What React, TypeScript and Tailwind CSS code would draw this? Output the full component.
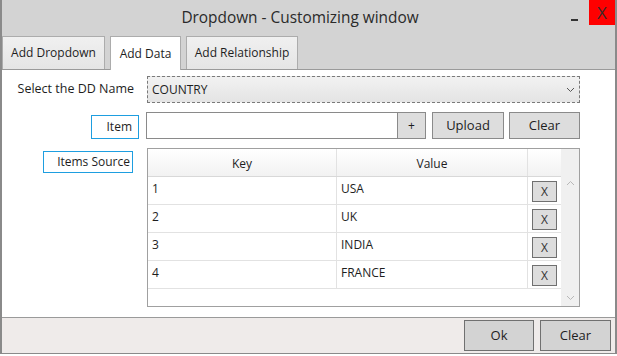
import React from 'react';

const ROWS = [
  { key: '1', value: 'USA' },
  { key: '2', value: 'UK' },
  { key: '3', value: 'INDIA' },
  { key: '4', value: 'FRANCE' },
];

function Tab({ label, width, active }: { label: string; width: string; active?: boolean }) {
  return (
    <div
      className={`${width} flex items-center justify-center border border-b-0 border-[#acacac] ${
        active ? 'h-[34px] bg-white -mb-px relative z-10' : 'h-[33px] bg-gradient-to-b from-[#f0f0f0] to-[#e5e5e5]'
      }`}
    >
      {label}
    </div>
  );
}

function Chevron({ up, color = '#b8b8b8' }: { up?: boolean; color?: string }) {
  return (
    <svg width="9" height="6" viewBox="0 0 9 6" className="block">
      <path d={up ? 'M1 5 L4.5 1.5 L8 5' : 'M1 1 L4.5 4.5 L8 1'} fill="none" stroke={color} strokeWidth="1" />
    </svg>
  );
}

export default function App() {
  return (
    <div className="w-[617px] h-[356px] bg-white overflow-hidden text-[12px] text-[#1e1e1e] font-['Open_Sans',sans-serif]">
      <div className="w-[617px] h-[354px] flex flex-col border-l-2 border-r-2 border-b border-[#8a8a8a] bg-[#d3d3d3]">
        {/* title bar */}
        <div className="h-[36px] flex items-start shrink-0">
          <div className="flex-1 h-full flex items-center justify-center pl-[38px] text-[15.4px] text-[#2a2a2a]">
            Dropdown - Customizing window
          </div>
          <div className="w-[29px] h-full">
            <div className="ml-[11px] mt-[19px] w-[7px] h-[2px] bg-[#333]" />
          </div>
          <div className="w-[26px] h-[25px] bg-[#ff0000] flex items-center justify-center text-[17px] text-[#3a2a2a]">
            X
          </div>
        </div>

        {/* tabs */}
        <div className="h-[33px] flex items-end gap-[5px] shrink-0">
          <Tab label="Add Dropdown" width="w-[103px]" />
          <Tab label="Add Data" width="w-[71px]" active />
          <Tab label="Add Relationship" width="w-[112px]" />
        </div>

        {/* content */}
        <div className="h-[249px] bg-white border-t border-b border-[#9a9a9a] flex flex-col shrink-0">
          {/* row 1 */}
          <div className="flex mt-[6px] h-[27px]">
            <div className="w-[145px] pr-[13px] flex items-center justify-end text-[12.5px]">Select the DD Name</div>
            <div className="w-[433px] h-[27px] border border-dashed border-[#7a7a7a] bg-gradient-to-b from-[#f2f2f2] to-[#e4e4e4] flex items-center justify-between pl-[4px] pr-[4px]">
              <span>COUNTRY</span>
              <Chevron color="#555" />
            </div>
          </div>

          {/* row 2 */}
          <div className="flex mt-[9px] h-[27px]">
            <div className="w-[144px]">
              <div className="ml-[89px] mt-[3px] w-[48px] h-[24px] border border-[#1e9ee0] flex items-center justify-end pr-[6px]">
                Item
              </div>
            </div>
            <div className="w-[252px] h-[27px] border border-[#8a8a8a] bg-white" />
            <div className="w-[28px] h-[27px] border border-l-0 border-[#8a8a8a] bg-[#dddddd] flex items-center justify-center">
              +
            </div>
            <div className="ml-[6px] w-[72px] h-[27px] border border-[#8a8a8a] bg-[#dddddd] flex items-center justify-center text-[13px]">
              Upload
            </div>
            <div className="ml-[5px] w-[71px] h-[27px] border border-[#8a8a8a] bg-[#dddddd] flex items-center justify-center text-[13px]">
              Clear
            </div>
          </div>

          {/* row 3 */}
          <div className="flex mt-[9px]">
            <div className="w-[145px]">
              <div className="ml-[41px] mt-[3px] w-[90px] h-[22px] border border-[#1e9ee0] flex items-center justify-end pr-[2px]">
                Items Source
              </div>
            </div>
            <div className="w-[433px] h-[159px] border border-[#a0a0a0] flex">
              <div className="w-[413px] flex flex-col">
                <div className="h-[28px] flex border-b border-[#d8d8d8] bg-gradient-to-b from-white to-[#f2f2f2]">
                  <div className="w-[189px] border-r border-[#e2e2e2] flex items-center justify-center pt-[2px]">Key</div>
                  <div className="w-[191px] border-r border-[#e2e2e2] flex items-center justify-center pt-[2px]">Value</div>
                  <div className="w-[33px]" />
                </div>
                {ROWS.map((r) => (
                  <div key={r.key} className="h-[28px] flex border-b border-[#e2e2e2]">
                    <div className="w-[189px] border-r border-[#e2e2e2] pl-[4px] pt-[3px]">{r.key}</div>
                    <div className="w-[191px] border-r border-[#e2e2e2] pl-[4px] pt-[3px]">{r.value}</div>
                    <div className="w-[33px] pl-[4px] pt-[4px]">
                      <div className="w-[25px] h-[21px] border border-[#707070] bg-[#dddddd] flex items-center justify-center text-[12px] text-[#333]">
                        X
                      </div>
                    </div>
                  </div>
                ))}
              </div>
              <div className="w-[18px] bg-[#f0f0f0] flex flex-col items-center justify-between pt-[31px] pb-[5px]">
                <Chevron up />
                <Chevron />
              </div>
            </div>
          </div>
        </div>

        {/* footer */}
        <div className="flex-1 bg-[#efebea] flex justify-end items-start pt-[2px] pr-[4px] gap-[6px]">
          <div className="w-[70px] h-[31px] border border-[#707070] bg-[#d3d3d3] flex items-center justify-center text-[13px]">
            Ok
          </div>
          <div className="w-[71px] h-[31px] border border-[#707070] bg-[#d3d3d3] flex items-center justify-center text-[13px]">
            Clear
          </div>
        </div>
      </div>
    </div>
  );
}
